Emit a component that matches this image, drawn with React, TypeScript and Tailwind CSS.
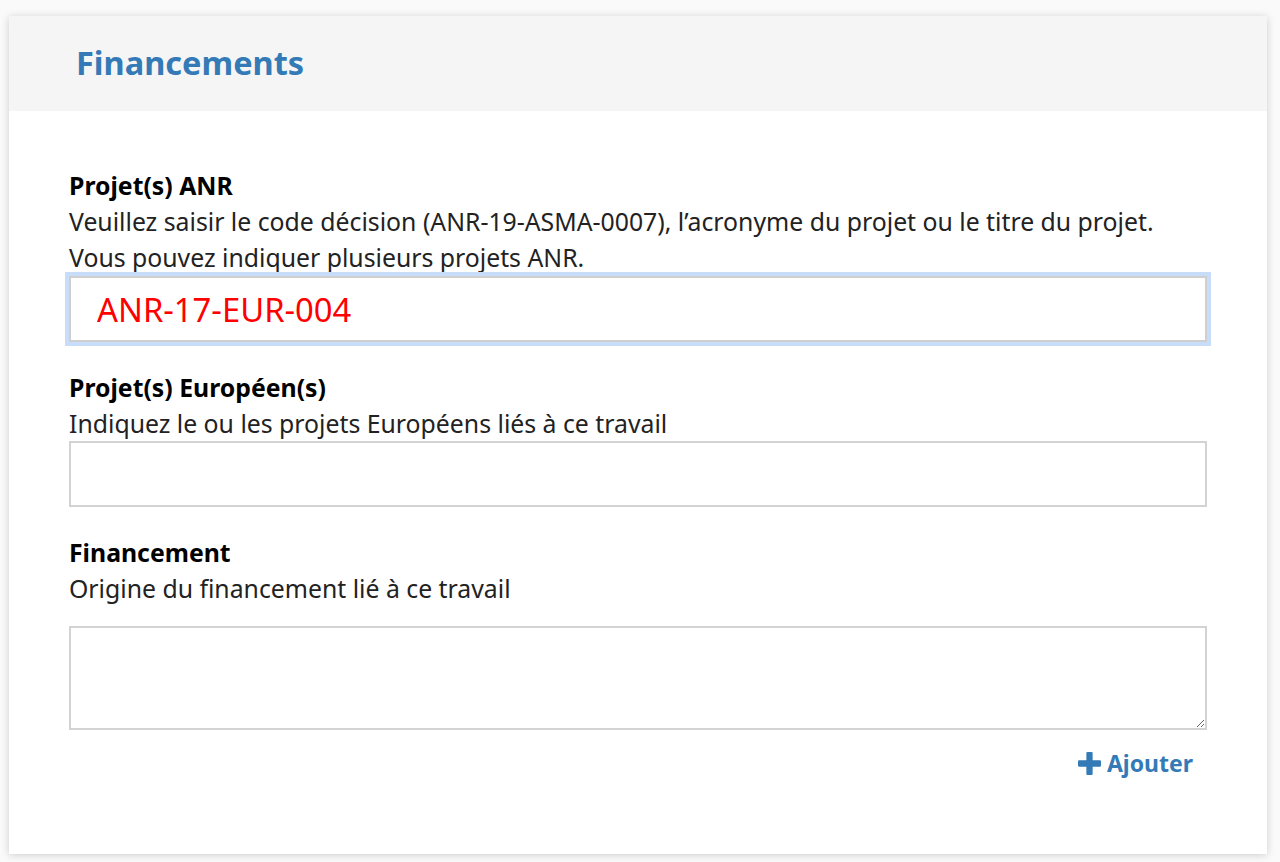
import React from "react";

export default function App() {
  const font = { fontFamily: '"Noto Sans", "Open Sans", sans-serif' };
  return (
    <div className="min-h-[862px] w-[1280px] bg-[#fafafa] pt-4 pb-2" style={font}>
      <div className="ml-[9px] w-[1258px] h-[838px] bg-white shadow-[0_1px_8px_rgba(0,0,0,0.18)] flex flex-col">
        <div className="h-[95px] bg-[#f5f5f5] flex items-center pl-[67px]">
          <h1 className="text-[32.5px] font-bold text-[#337ab7] leading-none">Financements</h1>
        </div>
        <div className="px-[60px] pt-[56px] flex flex-col">
          <div className="text-[24.8px] leading-[36px] font-bold text-black">Projet(s) ANR</div>
          <div className="text-[24.8px] leading-[36px] text-[#222] whitespace-nowrap">
            Veuillez saisir le code décision (ANR-19-ASMA-0007), l’acronyme du projet ou le titre du projet.
          </div>
          <div className="text-[24.8px] leading-[36px] text-[#222]">Vous pouvez indiquer plusieurs projets ANR.</div>
          <div className="mt-px">
            <input
              readOnly
              defaultValue="ANR-17-EUR-004"
              className="block w-full h-[66px] border-2 border-[#cfcfcf] shadow-[0_0_0_4px_#c7ddfa] outline-none px-[26px] text-[32.8px] text-[#ff0000] bg-white"
              style={font}
            />
          </div>

          <div className="mt-[27px] text-[24.8px] leading-[36px] font-bold text-black">Projet(s) Européen(s)</div>
          <div className="text-[24.8px] leading-[36px] text-[#222]">Indiquez le ou les projets Européens liés à ce travail</div>
          <input
            readOnly
            className="block w-full h-[66px] border-2 border-[#d3d3d3] outline-none bg-white"
          />

          <div className="mt-[27px] text-[24.8px] leading-[36px] font-bold text-black">Financement</div>
          <div className="text-[24.8px] leading-[36px] text-[#222]">Origine du financement lié à ce travail</div>
          <textarea
            readOnly
            className="mt-[20px] block w-full h-[104px] border-2 border-[#d3d3d3] outline-none bg-white"
          />

          <div className="flex justify-end mt-[18px] pr-[14px]">
            <span className="flex items-center gap-[6px] text-[#337ab7] font-bold text-[23px] leading-[30px]">
              <svg width="23" height="23" viewBox="0 0 22 22" fill="#337ab7">
                <rect x="8" y="0" width="6" height="22" rx="1" />
                <rect x="0" y="8" width="22" height="6" rx="1" />
              </svg>
              Ajouter
            </span>
          </div>
        </div>
      </div>
    </div>
  );
}
